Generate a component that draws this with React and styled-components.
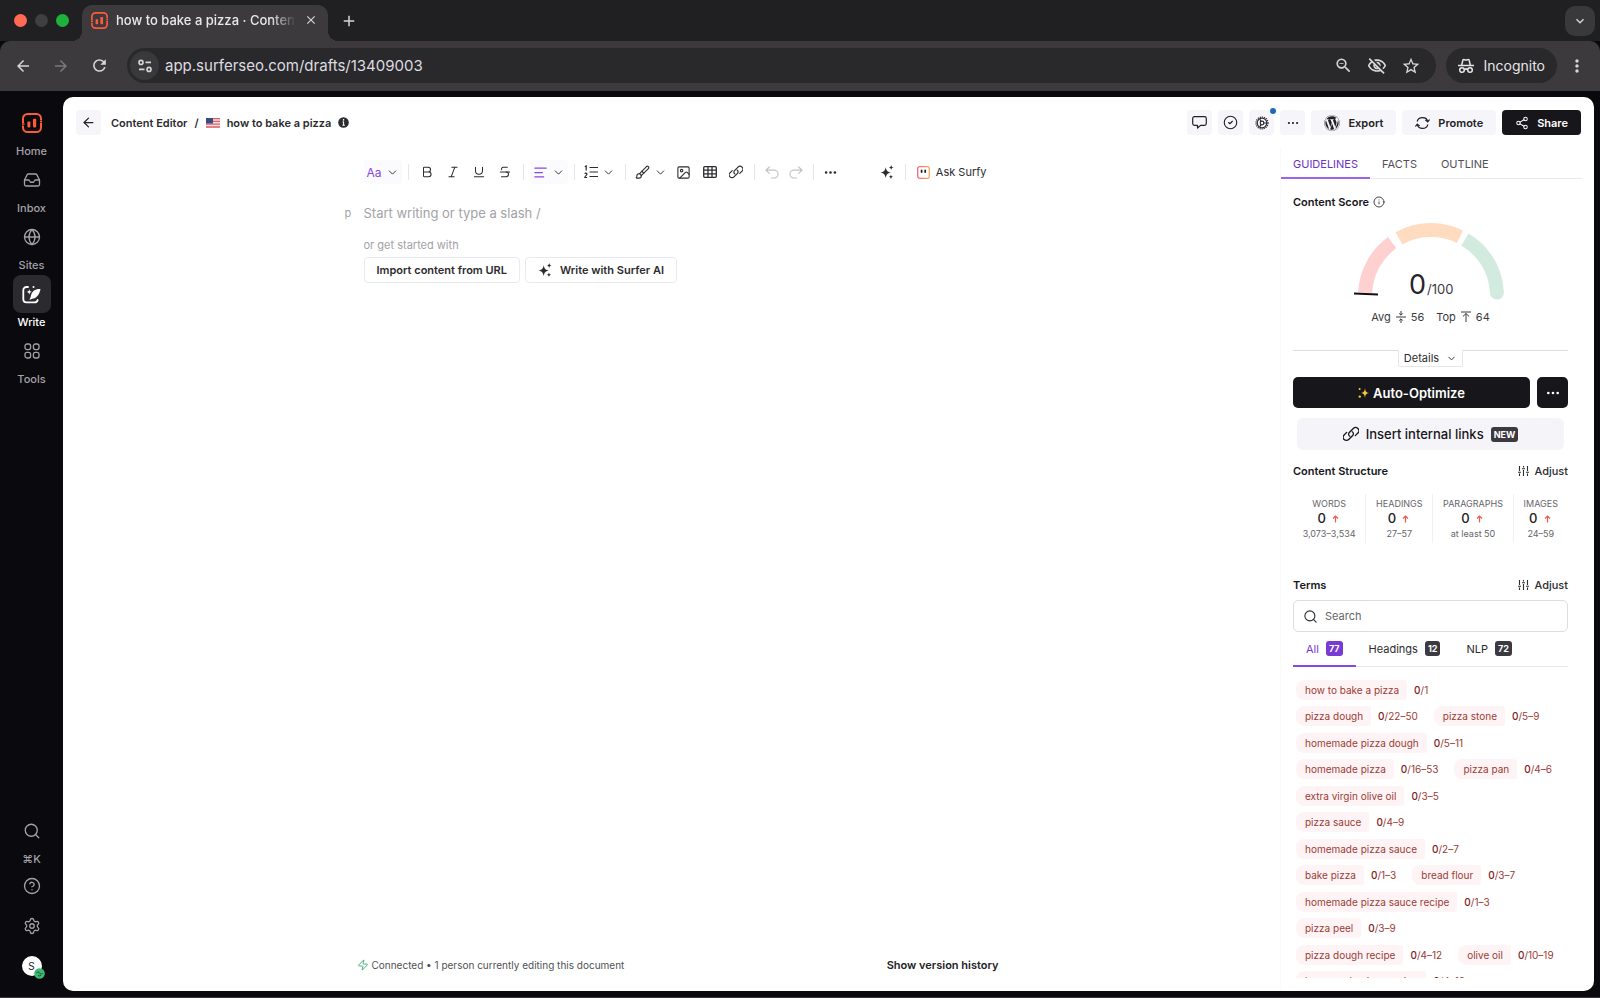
import React, { useState } from 'react';
import styled, { createGlobalStyle } from 'styled-components';
import {
  AlignLeft,
  ArrowLeft,
  Bold,
  Brush,
  ChevronDown,
  CircleCheck,
  CircleHelp,
  Ellipsis,
  Globe,
  Image,
  Inbox,
  Info,
  Italic,
  Search,
  Settings,
  Share2,
  Strikethrough,
  Underline,
  Zap,
} from 'lucide-react';
import {
  MdAdd,
  MdArrowBack,
  MdArrowForward,
  MdClose,
  MdExpandMore,
  MdMoreVert,
  MdOutlineVisibilityOff,
  MdRefresh,
  MdStarBorder,
  MdZoomOut,
} from 'react-icons/md';
import { FaWordpress } from 'react-icons/fa';

const termRows = [
  [['how to bake a pizza', '1']],
  [['pizza dough', '22–50'], ['pizza stone', '5–9']],
  [['homemade pizza dough', '5–11']],
  [['homemade pizza', '16–53'], ['pizza pan', '4–6']],
  [['extra virgin olive oil', '3–5']],
  [['pizza sauce', '4–9']],
  [['homemade pizza sauce', '2–7']],
  [['bake pizza', '1–3'], ['bread flour', '3–7']],
  [['homemade pizza sauce recipe', '1–3']],
  [['pizza peel', '3–9']],
  [['pizza dough recipe', '4–12'], ['olive oil', '10–19']],
  [['homemade pizza recipe', '4–10']],
];

const stats = [
  { label: 'WORDS', range: '3,073–3,534', size: 73 },
  { label: 'HEADINGS', range: '27–57', size: 67 },
  { label: 'PARAGRAPHS', range: 'at least 50', size: 80 },
  { label: 'IMAGES', range: '24–59', size: 55 },
];

const filters = [
  { name: 'All', count: 77 },
  { name: 'Headings', count: 12 },
  { name: 'NLP', count: 72 },
];

/* ---------- icons ---------- */

const Logo = ({ size = 20 }) => (
  <svg width={size} height={size} viewBox='0 0 20 20' fill='none' stroke='#fb5a3c' strokeWidth='2'>
    <path d='M1 10V5.5A4.5 4.5 0 0 1 5.500 1h9A4.500 4.500 0 0 1 19 5.500V7.600' />
    <path d='M19 10v4.500a4.500 4.500 0 0 1-4.500 4.500h-9A4.500 4.500 0 0 1 1 14.500v-2' />
    <path d='M18 8.800h2M0 11h2.500' strokeWidth='1.400' />
    <rect x='5.400' y='8.600' width='3' height='5.800' rx='0.800' fill='#fb5a3c' stroke='none' />
    <rect x='11' y='5.800' width='3.200' height='8.600' rx='0.800' fill='#fb5a3c' stroke='none' />
  </svg>
);

const Sparkles = ({ size = 16, color = 'currentColor' }) => (
  <svg width={size} height={size} viewBox='0 0 16 16' fill={color}>
    <path d='M6.500 2.600c.8 4 2 5.200 6 6.100-4 .9-5.200 2.100-6 6.100-.8-4-2-5.200-6-6.100 4-.9 5.200-2.100 6-6.100z' />
    <path d='M12.800 0c.35 1.900.9 2.500 2.900 2.900-2 .4-2.550 1-2.900 2.900-.35-1.900-.9-2.500-2.900-2.900 2-.4 2.550-1 2.900-2.900z' />
    <path d='M12.500 10.800c.3 1.600.8 2.200 2.600 2.600-1.800.4-2.300 1-2.600 2.600-.3-1.600-.8-2.200-2.600-2.600 1.800-.4 2.300-1 2.600-2.600z' />
  </svg>
);

const GoldSparkles = () => (
  <svg width='11' height='12' viewBox='0 0 11 12' fill='#fcc934'>
    <path d='M7 1c.4 3.400 1 4.300 4 5-3 .7-3.600 1.600-4 5-.4-3.400-1-4.300-4-5 3-.7 3.600-1.600 4-5z' />
    <circle cx='1.600' cy='2' r='1' />
    <circle cx='1.800' cy='9.600' r='1.200' />
  </svg>
);

const WriteIcon = () => (
  <svg width='19' height='19' viewBox='0 0 19 19' fill='none' stroke='#fff' strokeWidth='1.800' strokeLinecap='round'>
    <path d='M6 2H4.500A3.200 3.200 0 0 0 1.300 5.200v9a3.200 3.200 0 0 0 3.200 3.200h8a3.200 3.200 0 0 0 3.200-2.400' />
    <path d='M18.500 4c-5-.4-9 2-9.700 7.500L7.500 15l2.600-1.200C14.500 13.500 17.500 9.500 18.500 4z' fill='#fff' stroke='none' />
    <path d='M7.300 4c.3 2 .8 2.500 2.700 2.900-1.900.4-2.400.9-2.700 2.900-.3-2-.8-2.500-2.700-2.900 1.900-.4 2.400-.9 2.700-2.900z' fill='#fff' stroke='none' />
    <circle cx='11.500' cy='2' r='1' fill='#fff' stroke='none' />
  </svg>
);

const ToolsIcon = () => (
  <svg width='16' height='16' viewBox='0 0 16 16' fill='none' stroke='currentColor' strokeWidth='1.300'>
    <rect x='1' y='1' width='5.600' height='5.600' rx='2' />
    <rect x='9.400' y='1' width='5.600' height='5.600' rx='2' />
    <rect x='1' y='9.400' width='5.600' height='5.600' rx='2' />
    <rect x='9.400' y='9.400' width='5.600' height='5.600' rx='2' />
  </svg>
);

const SiteIcon = () => (
  <svg width='14' height='14' viewBox='0 0 14 14' fill='none' stroke='#d6d5d8' strokeWidth='1.600'>
    <circle cx='3' cy='3.400' r='2' />
    <path d='M7.500 3.400H13M1 10.400h5.500' />
    <circle cx='11' cy='10.400' r='2' />
  </svg>
);

const IncognitoIcon = () => (
  <svg width='16' height='16' viewBox='0 0 16 16' fill='none' stroke='#e6e5e8' strokeWidth='1.500'>
    <path d='M3.700 7 5 1.800c1-.6 1.500.2 3 .2s2-.8 3-.2L12.300 7' />
    <path d='M0 7.500h16' />
    <circle cx='4' cy='12' r='2.300' />
    <circle cx='12' cy='12' r='2.300' />
    <path d='M6.300 11.600c.8-.7 2.600-.7 3.400 0' />
  </svg>
);

const Flag = () => (
  <svg width='14' height='10' viewBox='0 0 14 10'>
    <rect width='14' height='10' fill='#f3dcdc' />
    <path d='M0 .7h14M0 3.400h14M0 6.100h14M0 9h14' stroke='#d9636b' strokeWidth='1.300' />
    <rect width='7' height='5.500' fill='#3a4a7c' />
  </svg>
);

const CommentIcon = () => (
  <svg width='15' height='15' viewBox='0 0 15 15' fill='none' stroke='currentColor' strokeWidth='1.200' strokeLinejoin='round'>
    <path d='M2.500 1.600h10a1.800 1.800 0 0 1 1.800 1.800v5.200a1.800 1.800 0 0 1-1.800 1.800H8.600L5.500 13v-2.600h-3A1.800 1.800 0 0 1 .7 8.600V3.400a1.800 1.800 0 0 1 1.800-1.800z' />
  </svg>
);

const LoopIcon = () => (
  <svg width='15' height='14' viewBox='0 0 15 14' fill='none' stroke='currentColor' strokeWidth='1.200' strokeLinecap='round' strokeLinejoin='round'>
    <path d='M2.300 5.200C2.900 2.800 4.700 1.600 7.500 1.600c2.900 0 4.700 1.300 5.200 4' />
    <path d='M14.300 3.900 12.700 5.800 10.700 4.300' />
    <path d='M12.700 8.800c-.6 2.400-2.400 3.600-5.200 3.600-2.900 0-4.700-1.300-5.200-4' />
    <path d='M.7 10.100 2.300 8.200l2 1.500' />
  </svg>
);

const UndoIcon = ({ flip }) => (
  <svg width='14' height='13' viewBox='0 0 14 13' fill='none' stroke='currentColor' strokeWidth='1.200' strokeLinecap='round' strokeLinejoin='round'>
    <g transform={flip ? 'matrix(-1 0 0 1 14 0)' : undefined}>
      <path d='M4.300 1 1 4.200l3.300 3.200M1 4.200h8.200a3.900 3.900 0 0 1 0 7.800H6.500' />
    </g>
  </svg>
);

const TableIcon = () => (
  <svg width='14' height='12' viewBox='0 0 14 12' fill='none' stroke='currentColor' strokeWidth='1.300'>
    <rect x='.7' y='.7' width='12.600' height='10.600' rx='1' />
    <path d='M.7 4.200h12.600M.7 7.800h12.600M5 .7v10.600M9 .7v10.600' />
  </svg>
);

const OrderedList = () => (
  <svg width='14' height='14' viewBox='0 0 14 14' fill='none' stroke='currentColor' strokeWidth='1.200'>
    <path d='M5.500 2.500H14M5.500 7H14M5.500 11.500H14' />
    <path d='M.8 1.800 2.200 1v4.500M.7 8.800c.6-1 2.300-.8 2.200.4C2.900 10.300.8 11 .8 12.500h2.400' />
  </svg>
);

const Chain = ({ size = 14 }) => (
  <svg width={size} height={size} viewBox='0 0 16 16' fill='none' stroke='currentColor' strokeWidth='1.300' strokeLinecap='round'>
    <path d='M6.800 10.200C5.400 9.400 5.200 7.600 6.300 6.500l4-4a3.200 3.200 0 0 1 4.600 4.500l-2.600 2.600' />
    <path d='M9.200 5.800c1.400.8 1.600 2.600.5 3.700l-4 4a3.200 3.200 0 0 1-4.600-4.500l2.600-2.600' />
  </svg>
);

const GearIcon = () => (
  <svg width='14' height='14' viewBox='0 0 14 14' fill='none' stroke='#2c2b30'>
    <circle cx='7' cy='7' r='6' strokeWidth='1.200' strokeDasharray='1.200 .9' />
    <circle cx='7' cy='7' r='4.800' strokeWidth='1.200' />
    <circle cx='7' cy='7' r='1.800' strokeWidth='1.200' />
    <path d='M8.500 7h3M6.200 5.500 4.800 3.200M6.200 8.500l-1.400 2.300' strokeWidth='1.200' />
  </svg>
);

const Sliders = () => (
  <svg width='11' height='12' viewBox='0 0 11 12' fill='none' stroke='currentColor' strokeWidth='1.100'>
    <path d='M1.500 1v5M1.500 8.500V11M5.500 1v1.500M5.500 5v6M9.500 1v5M9.500 8.500V11' />
    <path d='M0 7.200h3M4 3.800h3M8 7.200h3' />
  </svg>
);

const AvgIcon = () => (
  <svg width='10' height='12' viewBox='0 0 10 12' fill='none' stroke='currentColor' strokeWidth='1'>
    <path d='M0 6h10M5 0v4M3.200 2.400 5 4.200l1.800-1.800M5 12V8M3.200 9.600 5 7.800l1.800 1.800' />
  </svg>
);

const TopIcon = () => (
  <svg width='10' height='12' viewBox='0 0 10 12' fill='none' stroke='currentColor' strokeWidth='1'>
    <path d='M0 1h10M5 11V2.500M1.800 5.600 5 2.500l3.200 3.100' />
  </svg>
);

const RedArrow = () => (
  <svg width='7' height='8' viewBox='0 0 7 8' fill='none' stroke='#f4574c' strokeWidth='1.200'>
    <path d='M3.500 7.500V1M1 3.500 3.500 1 6 3.500' />
  </svg>
);

const Surfy = () => (
  <svg width='13' height='13' viewBox='0 0 13 13' fill='none'>
    <defs>
      <linearGradient id='surfy' x1='0' x2='1'>
        <stop offset='0' stopColor='#f0627c' />
        <stop offset='1' stopColor='#fbab5c' />
      </linearGradient>
    </defs>
    <rect x='.7' y='.7' width='11.600' height='11.600' rx='2' stroke='url(#surfy)' strokeWidth='1.300' />
    <path d='M4.600 3.800v3M8.200 3.800v3' stroke='#1b1a1f' strokeWidth='1.700' />
  </svg>
);

const InfoDot = () => (
  <svg width='11' height='11' viewBox='0 0 11 11'>
    <circle cx='5.500' cy='5.500' r='5.300' fill='#2c2b30' />
    <path d='M5.600 4.700v3.500M4.300 8.200h2.600M4.500 4.900h1.200' stroke='#fff' />
    <circle cx='5.500' cy='2.900' r='.8' fill='#fff' />
  </svg>
);

// Points are measured from the centre of the dial, angles in degrees
function arc(from, to) {
  const at = deg => {
    const rad = (deg * Math.PI) / 180;
    return `${76 + 66 * Math.cos(rad)} ${73 - 66 * Math.sin(rad)}`;
  };
  return `M${at(from)} A66 66 0 0 1 ${at(to)}`;
}

const Gauge = () => (
  <svg width='154' height='80' viewBox='-1 0 154 80' fill='none' strokeWidth='14' role='img' aria-label='Content score 0 of 100'>
    <path d={arc(177, 126)} stroke='#ffd0d0' />
    <path d={arc(119, 64)} stroke='#ffdcbf' />
    <path d={arc(59, 40)} stroke='#d3eade' />
    <path d={arc(45, 3)} stroke='#d3eade' strokeLinecap='round' />
    <path d='M-1 70.500 23 71.500' stroke='#111015' strokeWidth='2' />
    <text x='54' y='71' fontSize='27' fill='#26252b'>0</text>
    <text x='72' y='71' fontSize='13' fill='#3b3a40'>/100</text>
  </svg>
);

/* ---------- page ---------- */

export default function App() {
  return (
    <Page>
      <GlobalStyle />
      <Browser />
      <Workspace>
        <SideNav />
        <Panel>
          <TopBar />
          <Columns>
            <Editor />
            <Guidelines />
          </Columns>
        </Panel>
      </Workspace>
    </Page>
  );
}

function Browser() {
  const [url, setUrl] = useState('app.surferseo.com/drafts/13409003');
  return (
    <header>
      <TabStrip>
        <Light color='#ff6a55' />
        <Light color='#3f3e41' />
        <Light color='#1eb23c' />
        <BrowserTab>
          <Logo size={17} />
          <TabTitle>how to bake a pizza · Content</TabTitle>
          <PlainButton aria-label='Close tab'>
            <MdClose size={14} />
          </PlainButton>
        </BrowserTab>
        <PlainButton aria-label='New tab'>
          <MdAdd size={18} />
        </PlainButton>
        <TabMenu aria-label='Search tabs'>
          <MdExpandMore size={16} />
        </TabMenu>
      </TabStrip>
      <AddressRow>
        <NavButtons>
          <PlainButton aria-label='Back'><MdArrowBack size={18} /></PlainButton>
          <PlainButton aria-label='Forward' $dim><MdArrowForward size={18} /></PlainButton>
          <PlainButton aria-label='Reload'><MdRefresh size={19} /></PlainButton>
        </NavButtons>
        <AddressBar>
          <SiteInfo aria-label='Site information'><SiteIcon /></SiteInfo>
          <input aria-label='Address' value={url} onChange={e => setUrl(e.target.value)} />
          <PlainButton aria-label='Zoom'><MdZoomOut size={19} /></PlainButton>
          <PlainButton aria-label='Third-party cookies'><MdOutlineVisibilityOff size={20} /></PlainButton>
          <PlainButton aria-label='Bookmark'><MdStarBorder size={20} /></PlainButton>
        </AddressBar>
        <Incognito>
          <IncognitoIcon />
          Incognito
        </Incognito>
        <PlainButton aria-label='Menu'><MdMoreVert size={20} /></PlainButton>
      </AddressRow>
    </header>
  );
}

function SideNav() {
  return (
    <Nav>
      <NavItem href='#home'><i><Logo /></i>Home</NavItem>
      <NavItem href='#inbox'><i><Inbox size={18} strokeWidth={1.75} /></i>Inbox</NavItem>
      <NavItem href='#sites'><i><Globe size={18} strokeWidth={1.75} /></i>Sites</NavItem>
      <NavItem href='#write' $active><i><WriteIcon /></i>Write</NavItem>
      <NavItem href='#tools'><i><ToolsIcon /></i>Tools</NavItem>
      <NavBottom>
        <NavButton aria-label='Search'><Search size={18} strokeWidth={1.75} /></NavButton>
        <Shortcut>⌘K</Shortcut>
        <NavButton aria-label='Help'><CircleHelp size={18} strokeWidth={1.75} /></NavButton>
        <NavButton aria-label='Settings'><Settings size={18} strokeWidth={1.75} /></NavButton>
        <Avatar aria-label='Account'>
          S
          <svg width='11' height='11' viewBox='0 0 11 11' fill='none'>
            <circle cx='5.500' cy='5.500' r='5.300' fill='#3fb573' />
            <path d='M2.500 5c1-1.500 2-1.500 3 0s2 1.500 3 0M4 7.200l1.500.8L7 7.200' stroke='#1c5c3a' />
          </svg>
        </Avatar>
      </NavBottom>
    </Nav>
  );
}

function TopBar() {
  return (
    <Bar>
      <SoftButton $square aria-label='Back'><ArrowLeft size={15} /></SoftButton>
      <Crumbs>
        <a href='#content-editor'>Content Editor</a>
        <span>/</span>
        <Flag />
        <span>how to bake a pizza</span>
        <InfoDot />
      </Crumbs>
      <Actions>
        <SoftButton $square aria-label='Comments'><CommentIcon /></SoftButton>
        <SoftButton $square aria-label='Tasks'><CircleCheck size={15} strokeWidth={1.75} /></SoftButton>
        <SoftButton $square aria-label='Settings'>
          <GearIcon />
          <Dot />
        </SoftButton>
        <SoftButton $square aria-label='More'><Ellipsis size={14} strokeWidth={1.75} /></SoftButton>
        <SoftButton><FaWordpress size={16} />Export</SoftButton>
        <SoftButton><LoopIcon />Promote</SoftButton>
        <SoftButton $dark><Share2 size={14} strokeWidth={1.75} />Share</SoftButton>
      </Actions>
    </Bar>
  );
}

const Caret = () => <ChevronDown size={13} strokeWidth={1.75} />;

function Editor() {
  return (
    <EditorColumn>
      <Toolbar>
        <Tool $wide $on>Aa<Caret /></Tool>
        <Divider />
        <Tool aria-label='Bold'><Bold size={14} strokeWidth={1.75} /></Tool>
        <Tool aria-label='Italic'><Italic size={14} strokeWidth={1.75} /></Tool>
        <Tool aria-label='Underline'><Underline size={14} strokeWidth={1.75} /></Tool>
        <Tool aria-label='Strikethrough'><Strikethrough size={14} strokeWidth={1.75} /></Tool>
        <Divider />
        <Tool $wide $on aria-label='Align'><AlignLeft size={15} /><Caret /></Tool>
        <Divider />
        <Tool $wide aria-label='List'><OrderedList /><Caret /></Tool>
        <Divider />
        <Tool $wide aria-label='Highlight'><Brush size={15} strokeWidth={1.75} /><Caret /></Tool>
        <Tool aria-label='Image'><Image size={15} strokeWidth={1.75} /></Tool>
        <Tool aria-label='Table'><TableIcon /></Tool>
        <Tool aria-label='Link'><Chain /></Tool>
        <Divider />
        <Tool $tight aria-label='Undo' disabled><UndoIcon /></Tool>
        <Tool $tight aria-label='Redo' disabled><UndoIcon flip /></Tool>
        <Divider />
        <Tool $tight aria-label='More'><Ellipsis size={15} strokeWidth={2.25} /></Tool>
        <Surfer>
          <Tool aria-label='Surfer AI'><Sparkles size={14} /></Tool>
          <Divider />
          <AskSurfy><Surfy />Ask Surfy</AskSurfy>
        </Surfer>
      </Toolbar>
      <Document>
        <Line>
          <small>p</small>
          <input aria-label='Document' placeholder='Start writing or type a slash /' />
        </Line>
        <Starter>
          <p>or get started with</p>
          <OutlineButton>Import content from URL</OutlineButton>
          <OutlineButton><Sparkles size={14} />Write with Surfer AI</OutlineButton>
        </Starter>
      </Document>
      <Status>
        <Zap size={12} color='#35a873' strokeWidth={1.75} />
        Connected • 1 person currently editing this document
        <History>Show version history</History>
      </Status>
    </EditorColumn>
  );
}

function Guidelines() {
  const [query, setQuery] = useState('');
  return (
    <Aside>
      <PanelTabs>
        <PanelTab $active>GUIDELINES</PanelTab>
        <PanelTab>FACTS</PanelTab>
        <PanelTab>OUTLINE</PanelTab>
      </PanelTabs>
      <Scroll>
        <SectionHead>
          <h2>Content Score</h2>
          <Info size={12} strokeWidth={1.75} />
        </SectionHead>
        <Score>
          <Gauge />
          <ScoreRow>
            <span>Avg <AvgIcon /> 56</span>
            <span>Top <TopIcon /> 64</span>
          </ScoreRow>
        </Score>
        <DetailsRow>
          <button>Details<ChevronDown size={11} /></button>
        </DetailsRow>
        <OptimizeRow>
          <DarkButton $grow><GoldSparkles />Auto-Optimize</DarkButton>
          <DarkButton aria-label='More options'><Ellipsis size={16} /></DarkButton>
        </OptimizeRow>
        <LinksButton>
          <Chain size={16} />
          Insert internal links
          <Badge>NEW</Badge>
        </LinksButton>
        <SectionHead>
          <h2>Content Structure</h2>
          <Adjust><Sliders />Adjust</Adjust>
        </SectionHead>
        <Stats>
          {stats.map(s => (
            <Stat key={s.label} $size={s.size}>
              <dt>{s.label}</dt>
              <dd className='value'>0<RedArrow /></dd>
              <dd>{s.range}</dd>
            </Stat>
          ))}
        </Stats>
        <SectionHead>
          <h2>Terms</h2>
          <Adjust><Sliders />Adjust</Adjust>
        </SectionHead>
        <SearchBox>
          <Search size={15} strokeWidth={1.75} />
          <input
            type='search'
            placeholder='Search'
            value={query}
            onChange={e => setQuery(e.target.value)}
          />
        </SearchBox>
        <FilterTabs>
          {filters.map((f, i) => (
            <FilterTab key={f.name} $active={i === 0}>
              {f.name}
              <Badge $violet={i === 0}>{f.count}</Badge>
            </FilterTab>
          ))}
        </FilterTabs>
        <TermList>
          {termRows.map(row => (
            <li key={row[0][0]}>
              {row.map(([name, goal]) => (
                <Term key={name}>
                  <span>{name}</span>
                  <div><b>0</b>/{goal}</div>
                </Term>
              ))}
            </li>
          ))}
        </TermList>
      </Scroll>
    </Aside>
  );
}

/* ---------- styles ---------- */

const GlobalStyle = createGlobalStyle`
  * { box-sizing: border-box; }
  body { margin: 0; }
  body, button, input {
    font-family: Inter, 'Liberation Sans', sans-serif;
    font-size: 11px;
  }
  button {
    display: flex;
    align-items: center;
    justify-content: center;
    margin: 0;
    padding: 0;
    border: 0;
    background: none;
    color: inherit;
    white-space: nowrap;
  }
  a { color: inherit; text-decoration: none; }
  h2, p, dl, dd, ul { margin: 0; padding: 0; }
  ul { list-style: none; }
  svg { flex: none; }
`;

const Page = styled.div`
  display: flex;
  flex-direction: column;
  height: 100vh;
  overflow: hidden;
  background: #0a090d;
  border-bottom: 1px solid #3b393c;
`;

const TabStrip = styled.div`
  display: flex;
  align-items: center;
  gap: 8px;
  height: 41px;
  padding: 0 5px 0 14px;
  background: #201f22;
  color: #dddce0;
`;

const Light = styled.span`
  width: 13px;
  height: 13px;
  border-radius: 50%;
  background: ${p => p.color};
`;

const BrowserTab = styled.div`
  display: flex;
  align-items: center;
  align-self: flex-end;
  gap: 8px;
  width: 246px;
  height: 36px;
  margin: 0 4px 0 5px;
  padding: 0 10px 6px 9px;
  border-radius: 10px 10px 0 0;
  background: #3c3a3d;
  position: relative;
  &::before,
  &::after {
    content: '';
    position: absolute;
    bottom: 0;
    width: 10px;
    height: 10px;
  }
  &::before {
    right: 100%;
    background: radial-gradient(circle at 0 0, transparent 10px, #3c3a3d 10px);
  }
  &::after {
    left: 100%;
    background: radial-gradient(circle at 100% 0, transparent 10px, #3c3a3d 10px);
  }
`;

const TabTitle = styled.div`
  flex: 1;
  overflow: hidden;
  white-space: nowrap;
  font-size: 13px;
  font-weight: 500;
  color: #e8e7ea;
  mask-image: linear-gradient(90deg, #000 86%, transparent);
`;

const PlainButton = styled.button`
  color: ${p => (p.$dim ? '#79787c' : '#d6d5d8')};
`;

const TabMenu = styled(PlainButton)`
  width: 30px;
  height: 30px;
  margin-left: auto;
  border-radius: 10px;
  background: #39383b;
`;

const AddressRow = styled.div`
  display: flex;
  align-items: center;
  gap: 10px;
  height: 50px;
  padding: 0 13px 1px 14px;
  border-radius: 10px 10px 0 0;
  background: #3c3a3d;
`;

const NavButtons = styled.div`
  display: flex;
  gap: 20px;
  margin-right: 8px;
`;

const AddressBar = styled.div`
  display: flex;
  align-items: center;
  gap: 14px;
  flex: 1;
  height: 35px;
  padding: 0 15px 0 3px;
  border-radius: 18px;
  background: #29282b;
  input {
    flex: 1;
    min-width: 0;
    margin-left: -8px;
    padding: 0;
    border: 0;
    outline: 0;
    background: none;
    color: #dddce0;
    font-size: 15px;
  }
`;

const SiteInfo = styled.button`
  width: 29px;
  height: 29px;
  border-radius: 50%;
  background: #39383b;
`;

const Incognito = styled.div`
  display: flex;
  align-items: center;
  gap: 9px;
  height: 35px;
  padding: 0 12px;
  border-radius: 18px;
  background: #29282b;
  color: #e6e5e8;
  font-size: 14px;
`;

const Workspace = styled.div`
  display: flex;
  flex: 1;
  min-height: 0;
  padding: 6px 6px 6px 0;
`;

const Nav = styled.nav`
  display: flex;
  flex-direction: column;
  align-items: center;
  width: 63px;
  padding-top: 7px;
  color: #a3a2a8;
`;

const NavItem = styled.a`
  display: flex;
  flex-direction: column;
  align-items: center;
  font-weight: 500;
  line-height: 19px;
  color: ${p => (p.$active ? '#fff' : '#a3a2a8')};
  i {
    display: flex;
    align-items: center;
    justify-content: center;
    width: 38px;
    height: 38px;
    border-radius: 8px;
    background: ${p => (p.$active ? '#2b2a2f' : 'none')};
  }
`;

const NavBottom = styled.div`
  display: flex;
  flex-direction: column;
  align-items: center;
  margin-top: auto;
  padding-bottom: 15px;
`;

const NavButton = styled.button`
  width: 40px;
  height: 40px;
`;

const Shortcut = styled.span`
  line-height: 16px;
  font-weight: 500;
  margin-bottom: -1px;
`;

const Avatar = styled.button`
  position: relative;
  width: 20px;
  height: 20px;
  margin-top: 10px;
  border-radius: 50%;
  background: #fff;
  color: #222126;
  font-size: 10px;
  svg {
    position: absolute;
    right: -3px;
    bottom: -3px;
  }
`;

const Panel = styled.main`
  display: flex;
  flex-direction: column;
  flex: 1;
  min-width: 0;
  border-radius: 10px;
  overflow: hidden;
  background: #fff;
  color: #2c2b30;
`;

const Bar = styled.div`
  display: flex;
  align-items: center;
  gap: 10px;
  height: 51px;
  padding: 0 13px;
`;

const SoftButton = styled.button`
  position: relative;
  gap: 8px;
  height: 25px;
  min-width: 25px;
  padding: ${p => (p.$square ? '0' : '0 13px')};
  border-radius: 4px;
  background: ${p => (p.$dark ? '#17161a' : '#f6f5f9')};
  color: ${p => (p.$dark ? '#fff' : '#222126')};
  font-weight: 600;
`;

const Dot = styled.span`
  position: absolute;
  top: -2px;
  right: -2px;
  width: 6px;
  height: 6px;
  border-radius: 50%;
  background: #1d6ab8;
`;

const Crumbs = styled.div`
  display: flex;
  align-items: center;
  gap: 7px;
  font-weight: 600;
`;

const Actions = styled.div`
  display: flex;
  gap: 6px;
  margin-left: auto;
`;

const Columns = styled.div`
  display: flex;
  flex: 1;
  min-height: 0;
`;

const EditorColumn = styled.section`
  display: flex;
  flex-direction: column;
  align-items: center;
  flex: 1;
  min-width: 0;
  padding-top: 12px;
`;

const Toolbar = styled.div`
  display: flex;
  align-items: center;
  gap: 2px;
  width: 654px;
  max-width: 100%;
  padding-left: 19px;
`;

const toolWidth = p => {
  if (p.$wide) return '38px';
  return p.$tight ? '22px' : '24px';
};

const Tool = styled.button`
  gap: 4px;
  width: ${toolWidth};
  height: 24px;
  border-radius: 4px;
  background: ${p => (p.$on ? '#fbfafd' : 'none')};
  color: ${p => (p.$on ? '#8748e0' : '#2c2b30')};
  font-size: 12px;
  &:disabled {
    color: #c4c3c8;
  }
  svg + svg,
  svg:only-of-type:last-child {
    color: ${p => (p.$wide ? '#2c2b30' : 'inherit')};
  }
`;

const Divider = styled.span`
  width: 1px;
  height: 16px;
  margin: 0 4px;
  background: #e6e5ea;
`;

const Surfer = styled.div`
  display: flex;
  align-items: center;
  gap: 2px;
  margin-left: auto;
`;

const AskSurfy = styled.button`
  gap: 6px;
  height: 24px;
  padding: 0 12px 0 5px;
`;

const Document = styled.div`
  flex: 1;
  width: 654px;
  max-width: 100%;
  padding-top: 19px;
`;

const Line = styled.div`
  display: flex;
  align-items: center;
  color: #a3a2a8;
  line-height: 20px;
  small {
    width: 19px;
    font-size: 11px;
  }
  input {
    flex: 1;
    padding: 0;
    border: 0;
    outline: 0;
    font-size: 13px;
    &::placeholder {
      color: #a3a2a8;
    }
  }
`;

const Starter = styled.div`
  display: flex;
  flex-wrap: wrap;
  gap: 3px 5px;
  padding: 13px 0 0 19px;
  p {
    width: 100%;
    line-height: 18px;
    color: #a3a2a8;
  }
`;

const OutlineButton = styled.button`
  gap: 8px;
  height: 26px;
  padding: 0 12px;
  border: 1px solid #ebe9f0;
  border-radius: 4px;
  font-weight: 600;
`;

const Status = styled.footer`
  display: flex;
  align-items: center;
  gap: 3px;
  width: 654px;
  max-width: 100%;
  padding: 0 0 17px 12px;
  font-size: 10px;
  line-height: 18px;
  color: #515056;
`;

const History = styled.button`
  margin-left: auto;
  color: #222126;
  font-weight: 600;
`;

const Aside = styled.aside`
  display: flex;
  flex-direction: column;
  width: 314px;
  padding-bottom: 13px;
  border-left: 1px solid #faf9fb;
`;

const PanelTabs = styled.div`
  display: flex;
  height: 31px;
  margin-right: 12px;
  border-bottom: 1px solid #ebe9f0;
`;

const PanelTab = styled.button`
  height: 31px;
  padding: 2px 12px 0;
  border-bottom: 2px solid ${p => (p.$active ? '#9a63ea' : 'transparent')};
  color: ${p => (p.$active ? '#6d32c4' : '#515056')};
`;

const Scroll = styled.div`
  flex: 1;
  min-height: 0;
  overflow: hidden;
  padding: 14px 26px 0 12px;
`;

const SectionHead = styled.div`
  display: flex;
  align-items: center;
  gap: 4px;
  height: 18px;
  h2 {
    font-size: 11px;
    font-weight: 600;
    color: #17161a;
  }
`;

const Adjust = styled.button`
  gap: 5px;
  margin-left: auto;
  font-weight: 500;
`;

const Score = styled.div`
  display: flex;
  flex-direction: column;
  align-items: center;
  padding-top: 12px;
`;

const ScoreRow = styled.div`
  display: flex;
  gap: 12px;
  padding: 5px 0 24px;
  line-height: 18px;
  color: #3b3a40;
  span {
    display: flex;
    align-items: center;
    gap: 5px;
  }
`;

const DetailsRow = styled.div`
  display: flex;
  justify-content: center;
  border-top: 1px solid #dddce3;
  button {
    gap: 7px;
    height: 17px;
    margin-top: -1px;
    padding: 0 5px 1px;
    border: 1px solid #e6e5ea;
    border-top-color: #fff;
    border-radius: 0 0 2px 2px;
    background: #fff;
  }
`;

const OptimizeRow = styled.div`
  display: flex;
  gap: 7px;
  padding: 10px 0;
`;

const DarkButton = styled.button`
  flex: ${p => (p.$grow ? '1' : 'none')};
  gap: 4px;
  width: 31px;
  height: 31px;
  border-radius: 5px;
  background: #17161a;
  color: #fff;
  font-size: 13px;
  font-weight: 600;
`;

const LinksButton = styled.button`
  gap: 7px;
  width: calc(100% - 8px);
  height: 32px;
  margin: 0 4px 12px;
  border-radius: 6px;
  background: #f5f4f8;
  color: #17161a;
  font-size: 13px;
  font-weight: 500;
`;

const Badge = styled.span`
  padding: 0 3px;
  border-radius: 3px;
  background: ${p => (p.$violet ? '#7a3bd4' : '#3b3a40')};
  color: #fff;
  font-size: 9px;
  font-weight: 700;
  line-height: 15px;
`;

const Stats = styled.dl`
  display: flex;
  padding: 14px 0 33px;
`;

const Stat = styled.div`
  flex: ${p => p.$size} 1 0;
  padding: 2px 0;
  text-align: center;
  white-space: nowrap;
  color: #66656b;
  font-size: 9px;
  line-height: 15px;
  & + & {
    border-left: 1px solid #f1f0f4;
  }
  .value {
    display: flex;
    align-items: center;
    justify-content: center;
    gap: 6px;
    padding-right: 2px;
    font-size: 13px;
    font-weight: 500;
    color: #222126;
  }
`;

const SearchBox = styled.label`
  display: flex;
  align-items: center;
  gap: 7px;
  height: 32px;
  margin-top: 6px;
  padding: 0 9px;
  border: 1px solid #dddce3;
  border-radius: 5px;
  input {
    flex: 1;
    min-width: 0;
    padding: 0;
    border: 0;
    outline: 0;
    font-size: 11px;
    &::placeholder {
      color: #66656b;
    }
  }
`;

const FilterTabs = styled.div`
  display: flex;
  height: 35px;
  border-bottom: 1px solid #ebe9f0;
`;

const FilterTab = styled.button`
  gap: 7px;
  height: 35px;
  padding: 0 13px;
  border-bottom: 2px solid ${p => (p.$active ? '#8748e0' : 'transparent')};
  color: ${p => (p.$active ? '#7a3bd4' : '#2c2b30')};
`;

const TermList = styled.ul`
  display: flex;
  flex-direction: column;
  justify-content: space-between;
  height: 311px;
  margin-top: 13px;
  padding-left: 3px;
  li {
    display: flex;
    gap: 16px;
  }
`;

const Term = styled.div`
  display: flex;
  gap: 7px;
  font-size: 10px;
  line-height: 20px;
  white-space: nowrap;
  color: #9c3b35;
  span {
    padding: 0 8px 0 9px;
    border-radius: 8px 3px 3px 8px;
    background: #fff4f5;
  }
  b {
    font-weight: 500;
    color: #7d231e;
  }
`;
